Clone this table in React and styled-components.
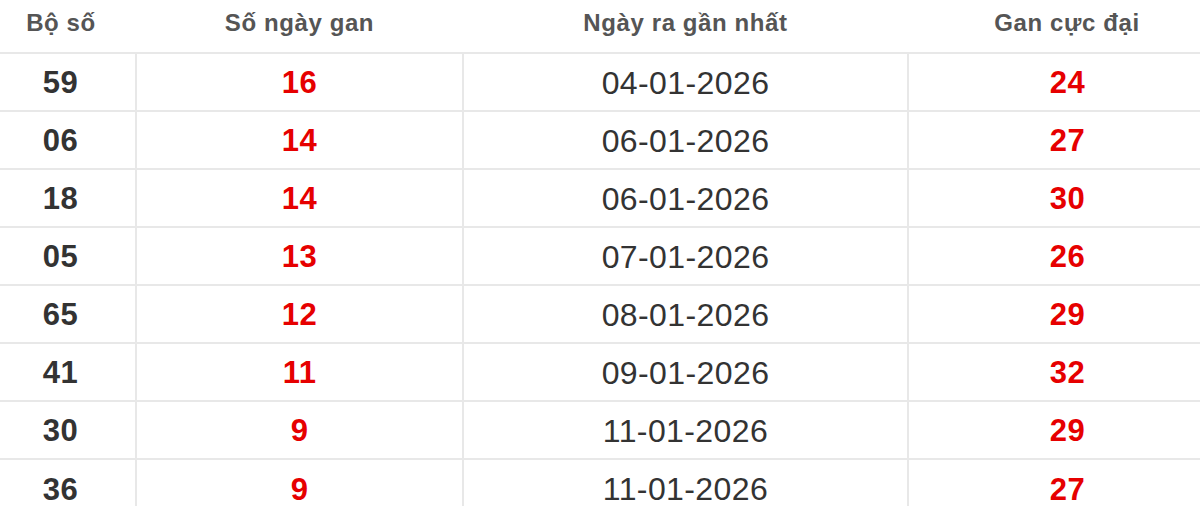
import React from 'react';
import styled, { createGlobalStyle } from 'styled-components';

const GlobalStyle = createGlobalStyle`
    html, body {
        margin: 0;
        padding: 0;
        background: #fff;
        overflow: hidden;
    }
    body {
        font-family: "Liberation Sans", Arial, sans-serif;
    }
`;

const LINE = '2px solid #e8e8e8';

const Table = styled.table`
    border-collapse: collapse;
    margin-left: -14px;
    width: 1240px;
    table-layout: fixed;
`;

const HeadCell = styled.th`
    height: 53px;
    padding: 0;
    font-size: 24px;
    letter-spacing: 0.6px;
    font-weight: bold;
    color: #555;
    text-align: center;
    vertical-align: middle;
    border-bottom: ${LINE};
    padding-bottom: 7px;
    box-sizing: border-box;
`;

const Row = styled.tr`
    height: 58px;
    & + & td {
        border-top: ${LINE};
    }
`;

const Cell = styled.td`
    padding: 0;
    padding-top: 2px;
    text-align: center;
    vertical-align: middle;
    font-size: ${props => (props.date ? '32px' : '31px')};
    letter-spacing: 0.4px;
    font-weight: ${props => (props.date ? 'normal' : 'bold')};
    color: ${props => (props.red ? '#e60000' : '#333')};
    & + & {
        border-left: ${LINE};
    }
`;

const rows = [
    ['59', '16', '04-01-2026', '24'],
    ['06', '14', '06-01-2026', '27'],
    ['18', '14', '06-01-2026', '30'],
    ['05', '13', '07-01-2026', '26'],
    ['65', '12', '08-01-2026', '29'],
    ['41', '11', '09-01-2026', '32'],
    ['30', '9', '11-01-2026', '29'],
    ['36', '9', '11-01-2026', '27'],
];

export default function App() {
    return (
        <>
            <GlobalStyle />
            <Table>
                <colgroup>
                    <col style={{ width: 150 }} />
                    <col style={{ width: 327 }} />
                    <col style={{ width: 445 }} />
                    <col style={{ width: 318 }} />
                </colgroup>
                <thead>
                    <tr>
                        <HeadCell>Bộ số</HeadCell>
                        <HeadCell>Số ngày gan</HeadCell>
                        <HeadCell>Ngày ra gần nhất</HeadCell>
                        <HeadCell>Gan cực đại</HeadCell>
                    </tr>
                </thead>
                <tbody>
                    {rows.map(r => (
                        <Row key={r[0]}>
                            <Cell>{r[0]}</Cell>
                            <Cell red>{r[1]}</Cell>
                            <Cell date>{r[2]}</Cell>
                            <Cell red>{r[3]}</Cell>
                        </Row>
                    ))}
                </tbody>
            </Table>
        </>
    );
}
